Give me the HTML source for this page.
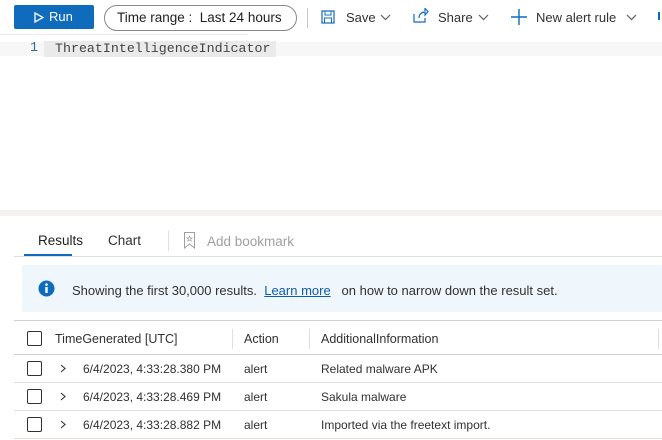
<!DOCTYPE html>
<html><head><style>
body{margin:0;width:662px;height:440px;overflow:hidden;background:#fff;font-family:"Liberation Sans",sans-serif;color:#323130;position:relative;font-size:13px}
.a{position:absolute;white-space:nowrap}
.cb{position:absolute;width:13px;height:13px;border:1.3px solid #323130;border-radius:2px;left:27px}
.hl{position:absolute;left:14px;right:0;height:1px;background:#e1dfdd}
.ch{position:absolute;left:60px}
</style></head><body>
<div class="a" style="left:14px;top:5px;width:80px;height:24px;background:#0f6cbd;border-radius:2px;color:#fff;font-size:13px;line-height:24px">
<svg style="position:absolute;left:20px;top:7px" width="10" height="11" viewBox="0 0 10 11"><path d="M1 1L9 5.5L1 10Z" fill="none" stroke="#fff" stroke-width="1.3"/></svg>
<span style="position:absolute;left:35px">Run</span></div>
<div class="a" style="left:104px;top:5px;width:191px;height:24px;border:1px solid #8a8886;border-radius:13px;line-height:24px;font-size:13.5px;color:#201f1e"><span style="margin-left:12px">Time range :&nbsp; Last 24 hours</span></div>
<div class="a" style="left:307px;top:8px;width:1px;height:20px;background:#c8c6c4"></div>
<svg class="a" style="left:321px;top:10px" width="14" height="14" viewBox="0 0 14 14"><rect x="1" y="1" width="12" height="12" fill="none" stroke="#0f6cbd" stroke-width="1.2"/><rect x="4" y="1" width="6" height="4" fill="none" stroke="#0f6cbd"/><rect x="3.5" y="8" width="7" height="5" fill="none" stroke="#0f6cbd"/></svg>
<div class="a" style="left:346px;top:10px;font-size:13px">Save</div>
<svg class="a" style="left:380px;top:14px" width="11" height="7"><path d="M1 1L5.5 5.5L10 1" fill="none" stroke="#605e5c" stroke-width="1.2"/></svg>
<svg class="a" style="left:413px;top:8px" width="16" height="15" viewBox="0 0 16 15"><path d="M1 6V14H12V10M6 10C6 6 9 4 12 4V7L15 3.5L12 0.5V3" fill="none" stroke="#0f6cbd" stroke-width="1.2"/></svg>
<div class="a" style="left:438px;top:10px">Share</div>
<svg class="a" style="left:478px;top:14px" width="11" height="7"><path d="M1 1L5.5 5.5L10 1" fill="none" stroke="#605e5c" stroke-width="1.2"/></svg>
<svg class="a" style="left:511px;top:9px" width="16" height="16"><path d="M8 0V16M0 8H16" stroke="#0f6cbd" stroke-width="1.4"/></svg>
<div class="a" style="left:536px;top:10px">New alert rule</div>
<svg class="a" style="left:626px;top:14px" width="11" height="7"><path d="M1 1L5.5 5.5L10 1" fill="none" stroke="#605e5c" stroke-width="1.2"/></svg>
<div class="a" style="left:658px;top:12px;width:2px;height:8px;background:#0f6cbd"></div>
<div class="a" style="left:0;top:34px;width:248px;height:1px;background:#edebe9"></div>
<div class="a" style="left:0;top:42px;width:662px;height:14px;background:#f7f7f7"></div>
<div class="a" style="left:44px;top:41px;width:232px;height:16px;background:#eaeaea"></div>
<div class="a" style="left:30px;top:41px;font-family:'Liberation Mono',monospace;font-size:13.5px;color:#237893">1</div>
<div class="a" style="left:55px;top:41px;font-family:'Liberation Mono',monospace;font-size:13.3px;color:#444">ThreatIntelligenceIndicator</div>
<div class="a" style="left:0;top:210px;width:662px;height:6px;background:#f3f2f1"></div>
<div class="a" style="left:38px;top:233px;font-size:13.5px;color:#201f1e">Results</div>
<div class="a" style="left:24px;top:254px;width:48px;height:2px;background:#0f6cbd"></div>
<div class="a" style="left:108px;top:233px;font-size:13.5px">Chart</div>
<div class="a" style="left:168px;top:231px;width:1px;height:20px;background:#e1dfdd"></div>
<svg class="a" style="left:184px;top:232px" width="11" height="17" viewBox="0 0 11 17"><path d="M0.5 0.5H10.5V16L5.5 12L0.5 16Z" fill="none" stroke="#a19f9d"/><path d="M5.5 4L6.3 6H8L6.7 7.2L7.2 9L5.5 8L3.8 9L4.3 7.2L3 6H4.7Z" fill="none" stroke="#a19f9d" stroke-width=".7"/></svg>
<div class="a" style="left:207px;top:234px;color:#a19f9d;font-size:13.5px">Add bookmark</div>
<div class="hl" style="top:256px"></div>
<div class="a" style="left:22px;top:265px;width:640px;height:47px;background:#eff6fc"></div>
<svg class="a" style="left:38px;top:280px" width="17" height="17"><circle cx="8.5" cy="8.5" r="8" fill="#0f6cbd"/><rect x="7.3" y="7" width="2.4" height="6" fill="#fff"/><circle cx="8.5" cy="4.6" r="1.3" fill="#fff"/></svg>
<div class="a" style="left:72px;top:283px;font-size:13px">Showing the first 30,000 results. &nbsp;<span style="color:#0f5ea8;text-decoration:underline">Learn more</span>&nbsp;&nbsp; on how to narrow down the result set.</div>
<div class="hl" style="top:320px;background:#d2d0ce"></div>
<div class="cb" style="top:331px"></div>
<div class="a" style="left:55px;top:332px;font-size:12.5px">TimeGenerated [UTC]</div>
<div class="a" style="left:232px;top:329px;width:1px;height:20px;background:#e1dfdd"></div>
<div class="a" style="left:244px;top:332px;font-size:12.5px">Action</div>
<div class="a" style="left:309px;top:329px;width:1px;height:20px;background:#e1dfdd"></div>
<div class="a" style="left:321px;top:332px;font-size:12.5px">AdditionalInformation</div>
<div class="a" style="left:658px;top:329px;width:1px;height:20px;background:#e1dfdd"></div>
<div class="hl" style="top:354px;background:#d2d0ce"></div>
<div class="cb" style="top:361px"></div><svg class="ch" style="top:364px" width="6" height="9"><path d="M1 1L5 4.5L1 8" fill="none" stroke="#323130" stroke-width="1.1"/></svg><div class="a" style="left:83px;top:362px;font-size:12px">6/4/2023, 4:33:28.380 PM</div><div class="a" style="left:244px;top:362px;font-size:12px">alert</div><div class="a" style="left:321px;top:362px;font-size:12px">Related malware APK</div>
<div class="hl" style="top:382px"></div>
<div class="cb" style="top:389px"></div><svg class="ch" style="top:392px" width="6" height="9"><path d="M1 1L5 4.5L1 8" fill="none" stroke="#323130" stroke-width="1.1"/></svg><div class="a" style="left:83px;top:390px;font-size:12px">6/4/2023, 4:33:28.469 PM</div><div class="a" style="left:244px;top:390px;font-size:12px">alert</div><div class="a" style="left:321px;top:390px;font-size:12px">Sakula malware</div>
<div class="hl" style="top:410px"></div>
<div class="cb" style="top:417px"></div><svg class="ch" style="top:420px" width="6" height="9"><path d="M1 1L5 4.5L1 8" fill="none" stroke="#323130" stroke-width="1.1"/></svg><div class="a" style="left:83px;top:418px;font-size:12px">6/4/2023, 4:33:28.882 PM</div><div class="a" style="left:244px;top:418px;font-size:12px">alert</div><div class="a" style="left:321px;top:418px;font-size:12px">Imported via the freetext import.</div>
<div class="hl" style="top:438px"></div>
</body></html>
